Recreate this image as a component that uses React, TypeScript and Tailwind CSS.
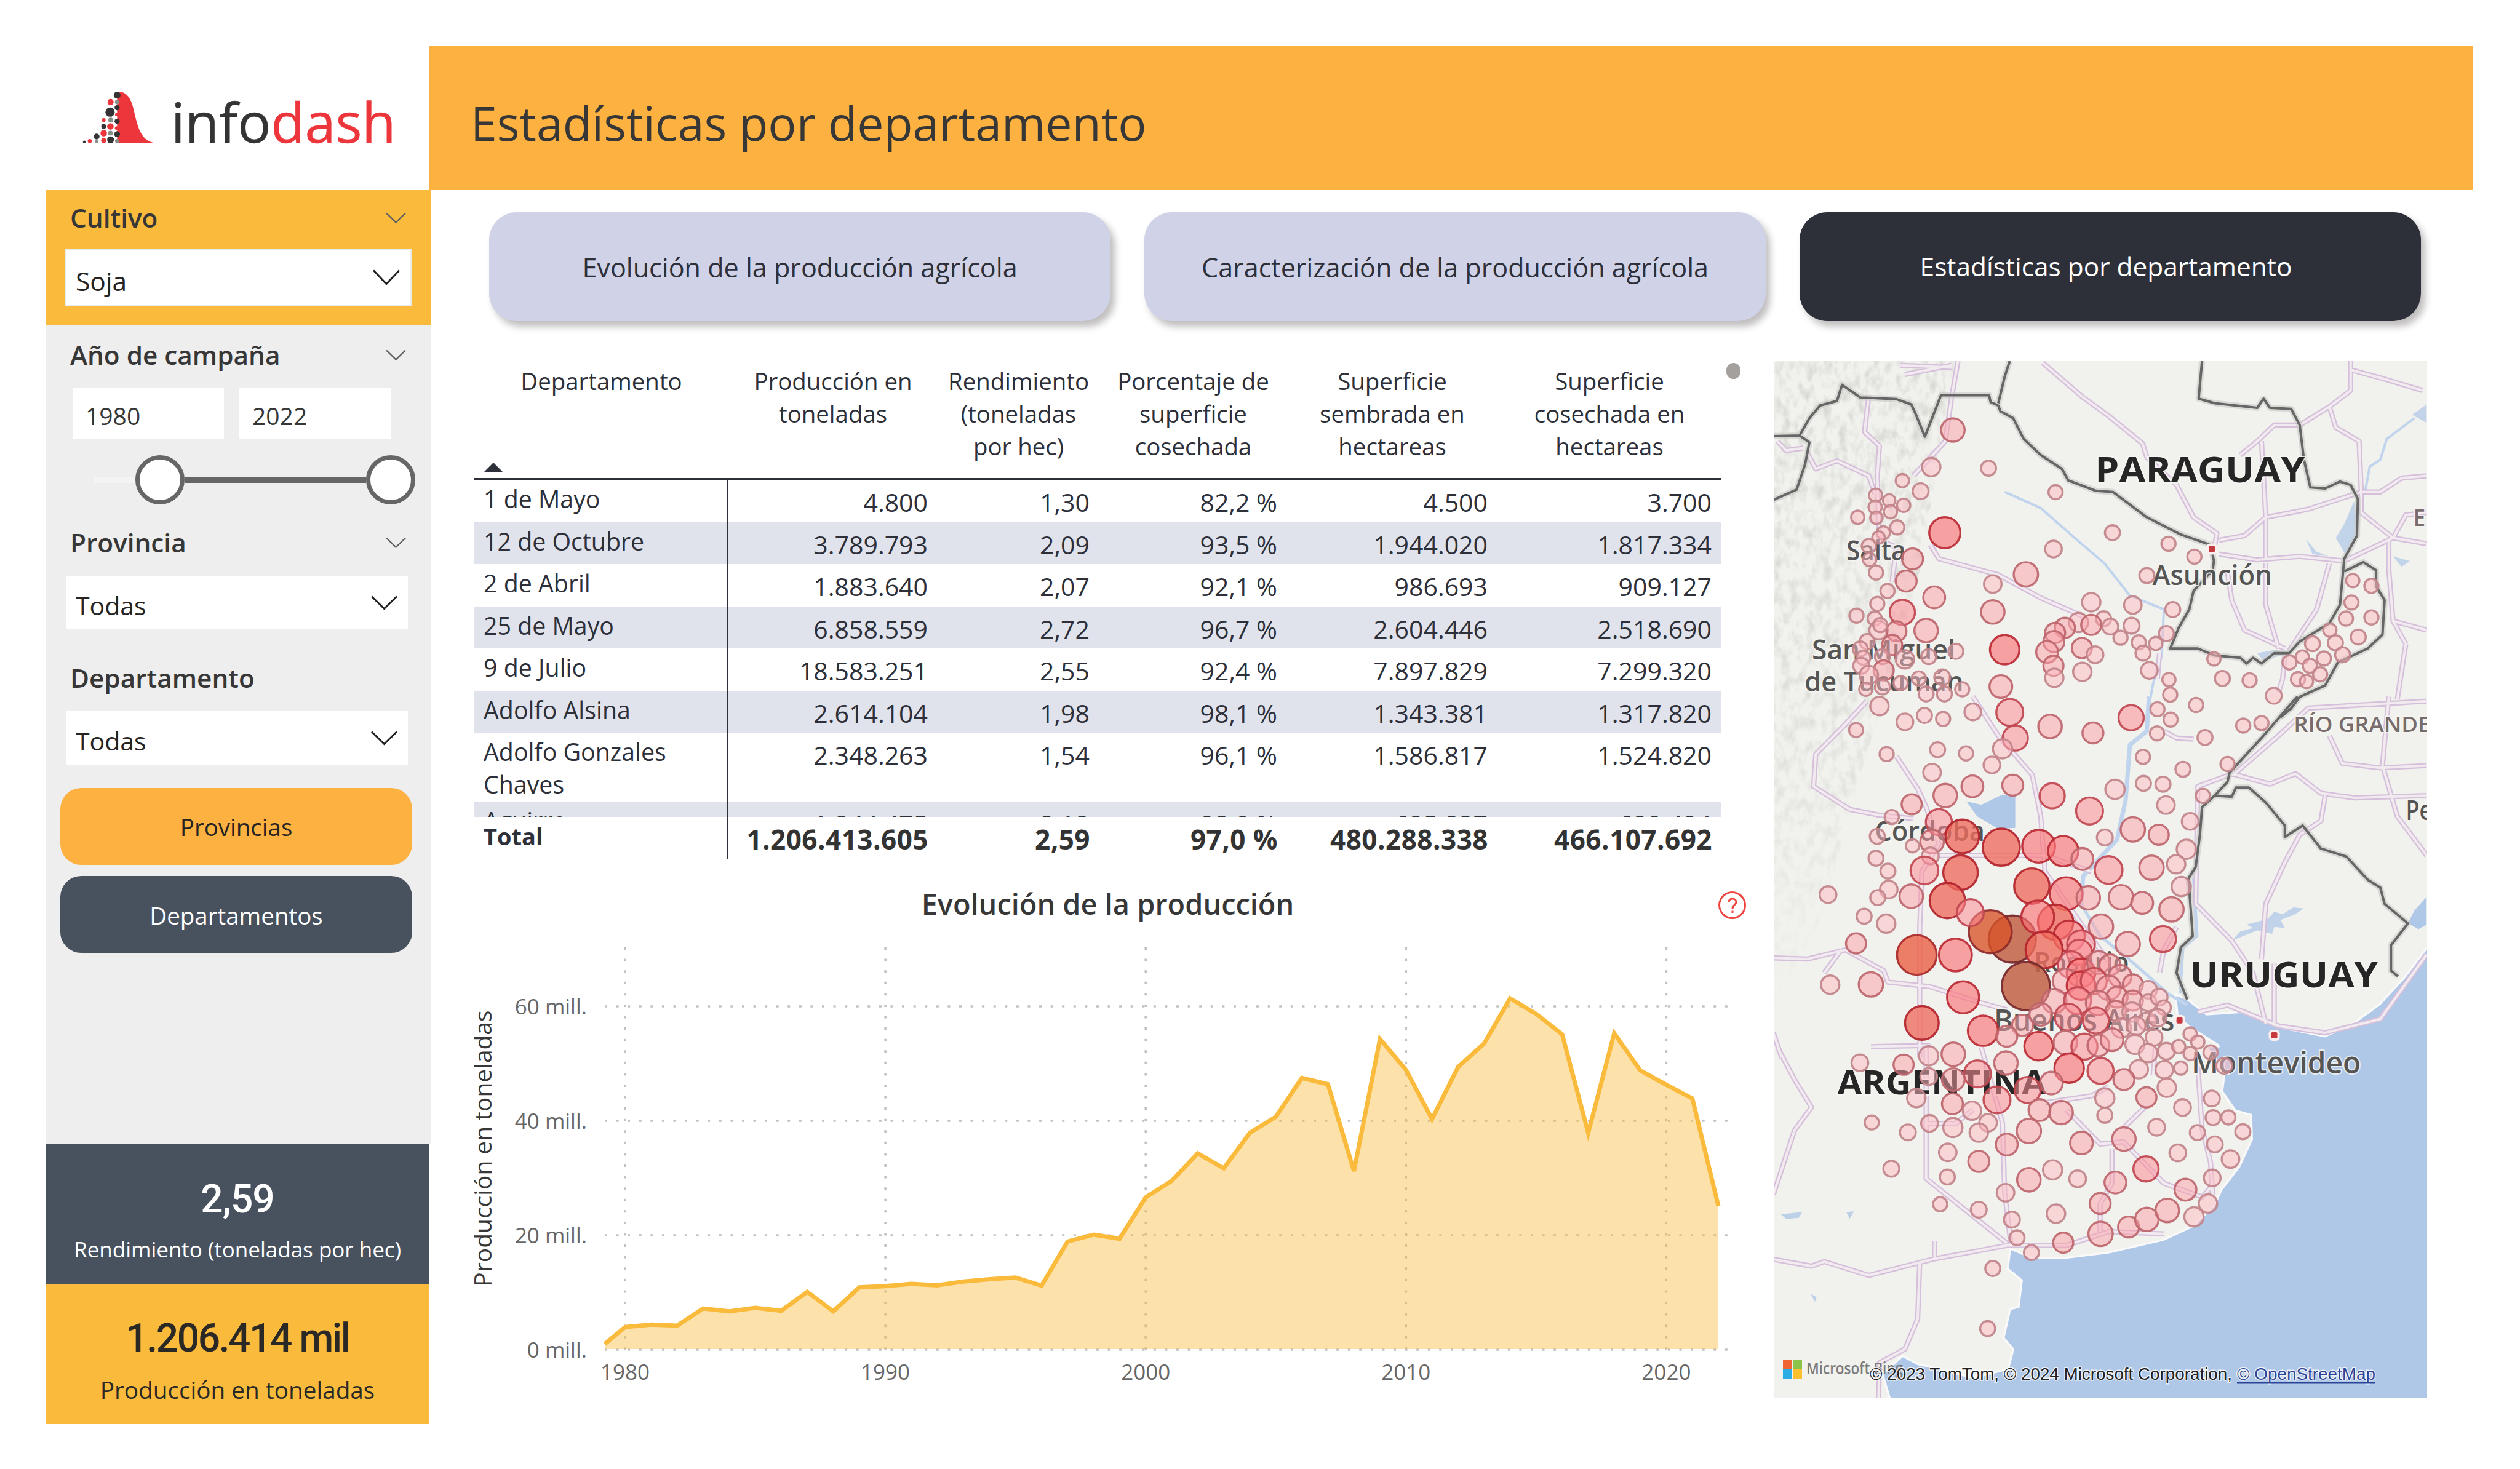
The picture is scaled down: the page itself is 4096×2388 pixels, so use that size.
import type { ReactNode } from "react";

const UI = "font-['Open_Sans','Noto_Sans',sans-serif]";

/* ---------- small pieces ---------- */

function Chevron({ w, h, color, stroke }: { w: number; h: number; color: string; stroke: number }) {
  return (
    <svg width={w} height={h} viewBox={`0 0 ${w} ${h}`} fill="none" stroke={color} strokeWidth={stroke} className="shrink-0">
      <path d={`M1 1.5L${w / 2} ${h - 2.5}L${w - 1} 1.5`} />
    </svg>
  );
}

function SlicerTitle({ children, chevron = true }: { children: ReactNode; chevron?: boolean }) {
  return (
    <div className="flex h-[60px] items-center justify-between pr-[40px] pl-[40px]">
      <span className="text-[42.3px] leading-[60px] font-semibold text-[#373737]">{children}</span>
      {chevron && <Chevron w={33} h={19} color="#606060" stroke={2.4} />}
    </div>
  );
}

/* ---------- logo ---------- */

const DARK = "#353435";
const RED = "#ec363b";
const GREY = "#899088";
const DOTS: [number, number, number, string][] = [
  [73, 346, 8, DARK], [105, 341, 12, RED], [145, 315, 17, DARK], [145, 344, 9, GREY],
  [186, 219, 11, RED], [186, 256, 14, DARK], [186, 295, 19, RED], [186, 338, 15, RED],
  [226, 114, 18, RED], [223, 173, 27, DARK], [226, 219, 14, GREY], [225, 256, 19, RED],
  [225, 295, 14, GREY], [226, 334, 20, DARK], [262, 187, 10, RED], [262, 266, 11, RED],
  [264, 74, 20, DARK], [264, 114, 13, GREY], [264, 147, 15, DARK], [264, 226, 15, DARK],
  [264, 301, 17, DARK], [264, 341, 12, GREY],
];

function Logo() {
  return (
    <div className="flex h-[235px] w-[624px] shrink-0 items-start pt-[68px] pl-[54px]">
      <svg width="147" height="96" viewBox="41 29 526 343">
        <path d="M264 54C312 50 338 84 352 128C372 196 378 262 414 312C432 336 455 346 484 353L264 353Z" fill={RED} />
        {DOTS.map(([x, y, r, c], i) => (
          <circle key={i} cx={x} cy={y} r={r} fill={c} />
        ))}
      </svg>
      <span className="-mt-[5px] ml-[3px] text-[90px] leading-[120px] text-[#353435] [-webkit-text-stroke:0.6px]">
        info<span className="text-[#ec363b]">dash</span>
      </span>
    </div>
  );
}

/* ---------- sidebar ---------- */

function Dropdown({ value }: { value: string }) {
  return (
    <div className="ml-[34px] flex h-[87px] w-[555px] items-center justify-between bg-white pr-[17px] pl-[15px]">
      <span className="pt-[9px] text-[41px] leading-[60px] text-[#252423]">{value}</span>
      <Chevron w={43} h={24} color="#1f1f1f" stroke={3} />
    </div>
  );
}

function Sidebar() {
  return (
    <aside className="flex w-[626px] shrink-0 flex-col">
      <section className="h-[220px] bg-[#fabb3d] pt-[15px]">
        <SlicerTitle>Cultivo</SlicerTitle>
        <div className="mt-[20px] ml-[31px] flex h-[94px] w-[565px] items-center justify-between border-[3px] border-[#e9ecec] bg-white pr-[17px] pl-[15px]">
          <span className="pt-[12px] text-[42.5px] leading-[60px] text-[#252423]">Soja</span>
          <Chevron w={44} h={26} color="#1f1f1f" stroke={3} />
        </div>
      </section>
      <section className="h-[1331px] bg-[#eeeeee] pt-[18px]">
        <SlicerTitle>Año de campaña</SlicerTitle>
        <div className="mt-[24px] ml-[44px] flex gap-[25px]">
          {["1980", "2022"].map((y) => (
            <div key={y} className="flex h-[83px] w-[246px] items-center bg-white pt-[6px] pl-[21px] text-[39px] leading-[60px] text-[#373737]">
              {y}
            </div>
          ))}
        </div>
        <div className="mt-[26px] flex h-[80px] items-center pl-[79px]">
          <div className="h-[9px] w-[67px] bg-[#f4f4f4]" />
          <div className="size-[80px] rounded-full border-[7px] border-[#666666] bg-white" />
          <div className="h-[10px] w-[295px] bg-[#666666]" />
          <div className="size-[80px] rounded-full border-[7px] border-[#666666] bg-white" />
        </div>
        <div className="mt-[32px]">
          <SlicerTitle>Provincia</SlicerTitle>
        </div>
        <div className="mt-[24px]">
          <Dropdown value="Todas" />
        </div>
        <div className="mt-[49px]">
          <SlicerTitle chevron={false}>Departamento</SlicerTitle>
        </div>
        <div className="mt-[24px]">
          <Dropdown value="Todas" />
        </div>
        <div className="mt-[38px] ml-[24px] flex w-[572px] flex-col gap-[18px] text-[38.5px]">
          <button className="h-[125px] rounded-[34px] bg-[#fcb140] pt-[3px] text-[#252423]">Provincias</button>
          <button className="h-[125px] rounded-[34px] bg-[#48525f] pt-[4px] text-white">Departamentos</button>
        </div>
      </section>
      <section className="flex h-[228px] w-[624px] flex-col items-center bg-[#48525f] pt-[50px] text-white">
        <span className="font-['Roboto',sans-serif] text-[64px] leading-[80px] font-medium tracking-[-1px]">2,59</span>
        <span className="mt-[11px] text-[35px] leading-[60px] whitespace-nowrap">Rendimiento (toneladas por hec)</span>
      </section>
      <section className="flex h-[227px] w-[624px] flex-col items-center bg-[#fabb3d] pt-[48px] text-[#2b2926]">
        <span className="font-['Roboto',sans-serif] text-[64px] leading-[80px] font-medium tracking-[-2.4px]">1.206.414 mil</span>
        <span className="mt-[13px] text-[38.7px] leading-[60px] whitespace-nowrap">Producción en toneladas</span>
      </section>
    </aside>
  );
}

/* ---------- table ---------- */

const COLS = "grid grid-cols-[413px_340px_263px_305px_342px_364px]";
const HEAD: string[][] = [
  ["Producción en", "toneladas"],
  ["Rendimiento", "(toneladas", "por hec)"],
  ["Porcentaje de", "superficie", "cosechada"],
  ["Superficie", "sembrada en", "hectareas"],
  ["Superficie", "cosechada en", "hectareas"],
];
const ROWS: string[][] = [
  ["1 de Mayo", "4.800", "1,30", "82,2 %", "4.500", "3.700"],
  ["12 de Octubre", "3.789.793", "2,09", "93,5 %", "1.944.020", "1.817.334"],
  ["2 de Abril", "1.883.640", "2,07", "92,1 %", "986.693", "909.127"],
  ["25 de Mayo", "6.858.559", "2,72", "96,7 %", "2.604.446", "2.518.690"],
  ["9 de Julio", "18.583.251", "2,55", "92,4 %", "7.897.829", "7.299.320"],
  ["Adolfo Alsina", "2.614.104", "1,98", "98,1 %", "1.343.381", "1.317.820"],
  ["Adolfo Gonzales Chaves", "2.348.263", "1,54", "96,1 %", "1.586.817", "1.524.820"],
  ["Aguirre", "1.244.475", "2,12", "98,0 %", "625.837", "620.494"],
];
const TOTAL = ["Total", "1.206.413.605", "2,59", "97,0 %", "480.288.338", "466.107.692"];

function Table() {
  return (
    <div className="flex h-[810px]">
      <div className="w-[2027px] text-[#2d2f39]">
        <div className={`${COLS} h-[193px] border-b-[3px] border-[#2d2f39] pt-[6px] text-center text-[38.4px] leading-[53px]`}>
          <div className="flex flex-col justify-between pb-[10px]">
            <span>Departamento</span>
            <svg width="30" height="15" viewBox="0 0 30 15" className="ml-[16px]">
              <path d="M0 15L15 0L30 15Z" fill="#2d2f39" />
            </svg>
          </div>
          {HEAD.map((lines, i) => (
            <div key={i}>
              {lines.map((l) => (
                <div key={l} className="whitespace-nowrap">{l}</div>
              ))}
            </div>
          ))}
        </div>
        <div className="h-[547.5px] overflow-hidden">
          {ROWS.map((r, i) => (
            <div key={r[0]} className={`${COLS} ${i === 6 ? "h-[111.5px]" : "h-[68.5px]"} ${i % 2 ? "bg-[#e0e2ec]" : "bg-white"}`}>
              <div className="border-r-[3px] border-[#2d2f39] pt-[5px] pr-[60px] pl-[15px] text-[39.3px] leading-[53px]">{r[0]}</div>
              {r.slice(1).map((c, j) => (
                <div key={j} className="pt-[10px] pr-[16px] text-right text-[41px] leading-[53px]">{c}</div>
              ))}
            </div>
          ))}
        </div>
        <div className={`${COLS} h-[69.5px] font-bold`}>
          <div className="border-r-[3px] border-[#2d2f39] pt-[5px] pl-[15px] text-[38px] leading-[53px]">{TOTAL[0]}</div>
          {TOTAL.slice(1).map((c, j) => (
            <div key={j} className="pt-[10px] pr-[15px] text-right text-[44px] leading-[53px] tracking-[0.5px] text-[#333333]">{c}</div>
          ))}
        </div>
      </div>
      <div className="mt-[3px] ml-[8px] h-[26px] w-[23px] rounded-full bg-[#a3a09d]" />
    </div>
  );
}

/* ---------- area chart ---------- */

const X0 = 1016;
const STEP = 42.31;
const BASE = 2194;
const SERIES = [
  3.95, 4.37, 4.2, 7.2, 6.7, 7.3, 6.8, 10.1, 6.7, 10.9, 11.1, 11.5, 11.25, 11.9, 12.3, 12.6, 11.2, 18.9, 20.1, 19.4,
  26.6, 29.5, 34.3, 31.7, 37.9, 40.7, 47.5, 46.4, 31.2, 54.3, 48.9, 40.3, 49.4, 53.5, 61.4, 58.7, 55.1, 37.9, 55.3,
  48.8, 46.3, 43.9, 25.1,
];
const yOf = (v: number) => BASE - v * 9.3;
const LINE = [[983, yOf(1)], ...SERIES.map((v, i) => [X0 + i * STEP, yOf(v)])].map((p) => p.join(" ")).join("L");

function Chart() {
  return (
    <div className="mt-[42px] w-[2067px]">
      <div className="flex h-[60px] items-center">
        <h2 className="flex-1 pl-[37px] text-center text-[46.9px] leading-[60px] font-semibold text-[#373737]">Evolución de la producción</h2>
        <div className="mt-[5px] flex size-[45px] items-center justify-center rounded-full border-[3.5px] border-[#ee4541] text-[#ee4541]">
          <svg width="16" height="26" viewBox="0 0 16 26" fill="none" stroke="currentColor" strokeWidth="3">
            <path d="M2 8C2 4 4.5 2 8 2S14 4.500 14 7.500C14 12 8 12 8 18" />
            <path d="M8 21.500V25" />
          </svg>
        </div>
      </div>
      <svg width="2067" height="817" viewBox="771 1499 2067 817" className="block">
        <g stroke="#c2c2c2" strokeWidth="3.6" strokeDasharray="4 14.58">
          {[0, 20, 40, 60].map((v) => (
            <path key={v} d={`M983 ${yOf(v)}H2820`} />
          ))}
          {[0, 10, 20, 30, 40].map((n) => (
            <path key={n} d={`M${X0 + n * STEP} 1540V${BASE}`} />
          ))}
        </g>
        <path d={`M${LINE}V${BASE - 1}H983Z`} fill="#fabb3d" fillOpacity="0.44" />
        <path d={`M${LINE}`} fill="none" stroke="#fabb3d" strokeWidth="7" />
        <g fill="#666666" fontSize="35">
          {[0, 20, 40, 60].map((v) => (
            <text key={v} x="954" y={yOf(v) + 13} textAnchor="end">{`${v} mill.`}</text>
          ))}
          {[1980, 1990, 2000, 2010, 2020].map((n) => (
            <text key={n} x={X0 + (n - 1980) * STEP} y="2243" textAnchor="middle">{n}</text>
          ))}
        </g>
        <text transform="translate(799 1867) rotate(-90)" textAnchor="middle" fontSize="38.9" fill="#373737">
          Producción en toneladas
        </text>
      </svg>
    </div>
  );
}

/* ---------- map ---------- */

const SX = 0.69;
const SY = 0.3744;
const NORTH = -8.24;
const MIDDLE = 545.3;
const SOUTH = 1115.6;

type Spot = [number, number, number];

const NORTH_SPOTS: Spot[] = [
  [433, 321, 30], [382, 482, 24], [517, 487, 20], [314, 541, 18], [357, 587, 21], [251, 604, 18], [283, 627, 17],
  [317, 648, 18], [250, 656, 18], [286, 676, 18], [209, 700, 18], [253, 702, 17], [302, 744, 19], [675, 591, 19],
  [269, 768, 18], [258, 788, 17], [414, 767, 39], [809, 767, 20], [670, 838, 22], [941, 815, 19], [1002, 871, 19],
  [235, 825, 19], [237, 884, 18], [338, 881, 27], [252, 940, 19], [323, 977, 27], [605, 948, 31], [890, 953, 20],
  [527, 990, 23], [279, 1020, 19], [389, 1048, 28], [255, 1076, 19], [314, 1113, 32], [206, 1127, 19], [527, 1111, 30],
  [249, 1140, 19], [759, 1069, 24], [857, 1081, 23], [951, 1101, 20], [258, 1190, 24], [300, 1195, 26], [262, 1168, 19],
  [370, 1192, 30], [729, 1157, 25], [788, 1141, 20], [759, 1167, 26], [697, 1180, 26], [804, 1175, 21], [854, 1171, 21],
  [828, 1223, 19], [936, 1205, 20], [871, 1243, 19], [911, 1248, 18], [881, 1290, 20], [674, 1202, 26], [671, 1240, 27],
  [655, 1285, 28], [737, 1268, 26], [768, 1297, 22], [670, 1345, 26], [738, 1371, 24], [672, 1397, 24], [896, 1365, 22],
  [942, 1405, 18], [945, 1470, 19], [555, 1275, 37], [546, 1435, 29], [567, 1547, 34], [231, 1240, 20], [215, 1272, 20],
  [290, 1255, 26], [267, 1305, 20], [222, 1310, 19], [320, 1317, 24], [376, 1305, 20], [440, 1282, 20], [217, 1345, 21],
  [270, 1365, 26], [235, 1385, 24], [353, 1400, 19], [408, 1395, 21], [310, 1420, 19], [267, 1437, 20], [228, 1447, 18],
  [370, 1467, 20], [413, 1467, 20], [455, 1447, 19], [260, 1520, 24], [480, 1545, 22], [1048, 1315, 18], [1068, 1400, 20],
  [1132, 1408, 19], [1189, 1475, 21], [1006, 1515, 19], [1226, 1330, 19], [1256, 1307, 18], [1274, 1345, 19],
  [1307, 1313, 19], [1246, 1403, 19], [1266, 1413, 18], [1298, 1382, 19], [1321, 1190, 18], [1280, 1249, 20],
  [1334, 1245, 20], [1351, 1297, 20], [1388, 1220, 20], [1359, 1140, 19], [1419, 1135, 19], [1372, 1070, 19],
  [1375, 975, 18], [1419, 998, 19],
];

const MIDDLE_SPOTS: Spot[] = [
  [915, 55, 19], [946, 100, 19], [366, 82, 20], [410, 97, 19], [320, 110, 22], [205, 145, 19], [662, 130, 30],
  [763, 158, 27], [853, 92, 32], [914, 160, 19], [1027, 178, 20], [1117, 126, 19], [1160, 115, 19], [580, 180, 32],
  [550, 227, 25], [525, 297, 22], [277, 250, 19], [397, 231, 20], [464, 247, 19], [881, 262, 19], [975, 316, 20],
  [1080, 293, 19], [384, 330, 23], [479, 390, 28], [574, 385, 27], [667, 431, 32], [415, 430, 30], [815, 403, 25],
  [882, 377, 20], [928, 381, 20], [1022, 431, 19], [935, 471, 23], [336, 468, 26], [755, 497, 34], [289, 523, 19],
  [992, 542, 22], [400, 545, 33], [857, 577, 31], [918, 600, 26], [455, 607, 42], [547, 654, 46], [635, 650, 41],
  [693, 671, 38], [791, 612, 21], [255, 607, 20], [384, 630, 30], [338, 648, 18], [380, 692, 22], [738, 705, 28],
  [983, 663, 25], [252, 702, 20], [280, 758, 20], [366, 755, 35], [451, 764, 43], [800, 753, 35], [901, 743, 31],
  [959, 728, 24], [282, 838, 23], [256, 873, 20], [139, 860, 22], [335, 867, 30], [971, 825, 25], [420, 886, 44],
  [619, 823, 44], [700, 856, 41], [752, 874, 30], [829, 871, 31], [879, 896, 28], [573, 1053, 58], [521, 1021, 53],
  [474, 938, 34], [948, 924, 31], [224, 954, 20], [276, 986, 24], [782, 999, 31], [675, 980, 44], [633, 957, 41],
  [707, 1040, 39], [648, 1100, 46], [735, 1075, 35], [845, 1075, 31], [928, 1053, 33], [205, 1072, 26], [348, 1122, 49],
  [439, 1122, 41], [731, 1110, 32], [605, 1257, 59], [144, 1251, 24], [240, 1250, 31], [457, 1306, 40], [360, 1417, 42],
  [504, 1451, 38], [712, 1165, 34], [735, 1200, 36], [776, 1155, 29], [803, 1165, 27], [697, 1235, 31], [827, 1215, 29],
  [735, 1255, 36], [765, 1235, 33], [800, 1265, 31], [857, 1250, 26], [893, 1273, 23], [820, 1305, 27], [857, 1320, 26],
  [893, 1330, 22], [919, 1305, 22], [930, 1350, 19], [672, 1322, 31], [727, 1320, 34], [775, 1330, 31], [817, 1365, 26],
  [855, 1370, 25], [640, 1380, 29], [705, 1392, 34], [770, 1407, 33], [830, 1440, 25], [890, 1410, 23], [915, 1395, 23],
  [865, 1430, 24], [597, 1428, 27], [560, 1475, 27], [635, 1518, 36], [698, 1503, 30], [743, 1520, 33], [776, 1515, 28],
  [808, 1490, 29], [862, 1510, 25], [907, 1480, 22], [893, 1548, 24], [936, 1540, 22], [965, 1520, 18], [992, 1465, 18],
  [1010, 1500, 18], [1040, 1545, 19],
];

const SOUTH_SPOTS: Spot[] = [
  [214, 67, 22], [317, 75, 26], [376, 37, 25], [434, 30, 30], [491, 115, 34], [558, 68, 30], [707, 90, 37],
  [781, 102, 33], [871, 95, 24], [836, 140, 27], [931, 97, 23], [970, 90, 18], [992, 27, 18], [1072, 80, 21],
  [376, 127, 22], [434, 140, 29], [665, 155, 29], [609, 185, 33], [537, 228, 34], [347, 220, 24], [432, 245, 27],
  [478, 275, 24], [516, 327, 23], [637, 272, 28], [688, 283, 30], [791, 220, 25], [791, 295, 20], [889, 217, 26],
  [937, 175, 24], [974, 261, 22], [1043, 222, 21], [378, 330, 22], [433, 348, 25], [494, 370, 24], [242, 326, 19],
  [327, 369, 21], [612, 363, 31], [560, 422, 28], [736, 415, 29], [836, 398, 30], [913, 347, 22], [1046, 305, 20],
  [1082, 304, 19], [1009, 370, 20], [1116, 366, 20], [1050, 421, 21], [1087, 485, 23], [963, 458, 22], [421, 456, 23],
  [494, 495, 27], [288, 527, 21], [420, 563, 20], [612, 575, 30], [668, 532, 25], [727, 571, 22], [888, 528, 32],
  [1044, 567, 22], [816, 587, 28], [981, 618, 28], [557, 631, 23], [403, 681, 19], [494, 705, 21], [780, 678, 27],
  [676, 722, 24], [1034, 678, 24], [572, 748, 21], [847, 780, 27], [890, 747, 30], [938, 708, 30], [1001, 736, 25],
  [781, 810, 31], [693, 848, 26], [584, 827, 20], [618, 891, 20], [527, 960, 20], [515, 1221, 20],
];

/* fill, outline and fill opacity by bubble size */
function tone(r: number): [string, string, number] {
  if (r >= 55) return ["#c26347", "#75282b", 0.86];
  if (r >= 50) return ["#d85329", "#8d2a2a", 0.78];
  if (r >= 47) return ["#eb6044", "#a82a2a", 0.8];
  if (r >= 42) return ["#f06c5e", "#b3242c", 0.78];
  if (r >= 36) return ["#fa7478", "#bb2a34", 0.65];
  if (r >= 32) return ["#fc8d95", "#c04650", 0.55];
  if (r >= 26) return ["#fb9fa7", "#bd666d", 0.5];
  return ["#ffbac2", "#c1848a", 0.5];
}

function Spots({ data, top }: { data: Spot[]; top: number }) {
  return (
    <>
      {data.map(([x, y, r], i) => {
        const [fill, stroke, o] = tone(r);
        return (
          <circle key={i} cx={x * SX - 7.6} cy={y * SY + top} r={r * SX - 1.6} fill={fill} fillOpacity={o} stroke={stroke} strokeOpacity={0.92} strokeWidth="3.4" />
        );
      })}
    </>
  );
}

const ROADS: [number, string][] = [
  [NORTH, "M445 22L430 180L415 370L340 520M645 30L740 180L800 260L880 380L890 440L960 560L1000 700L1055 770L1050 820M1370 22L1370 150L1320 220L1335 310L1390 370L1395 590L1395 680L1470 790L1549 815M1370 60L1450 100L1540 150M1320 220L1250 300L1190 300L1150 370L1110 430M1160 370L1170 700L1170 880M1395 590L1270 665L1200 690L1170 700L1120 780L1060 800M1060 860L1150 885L1250 870L1355 890L1470 790L1500 690L1549 680M235 170L225 330L260 390L255 520M90 420L110 490L160 455L235 520L250 600M380 820L400 880L540 950L640 1050L740 1130M1080 940L1090 1060L1120 1190L1215 1270M1170 900L1170 1080L1200 1270M1320 900L1290 1100L1225 1280M1460 800L1460 930L1470 1150L1500 1250M1470 1150L1549 1190M920 1290L915 1400M1215 1290L1210 1400L1200 1460M1500 1250L1480 1490M255 520L260 800L300 830L290 980M310 40L430 50M320 80L430 40M1395 590L1440 590L1490 530L1549 520M20 370L40 410L80 400"],
  [MIDDLE, "M230 20L180 120L110 250L105 390L190 490L260 515L340 530M300 260L350 400L370 480L400 640L360 760L355 1000L355 1568M480 0L540 170L620 340L640 520L650 760L740 1000L800 1150M1549 20L1270 50L1200 170L1100 330L1010 390L1005 900L1090 1060L1140 1200L1170 1420M1090 335L1180 380L1240 335L1300 420L1380 440L1549 430M1320 170L1350 290L1440 310L1549 300M1460 0L1445 300L1480 520L1549 690M1310 430L1300 540L1250 600L1215 720L1170 900L1160 1140M10 1135L90 1140L180 1100L270 1190L280 1240L380 1260L500 1330L560 1360M170 1100L130 1200M930 150L960 180L1000 185M1549 1120L1440 1400L1310 1460L1200 1430L1080 1340L1010 1370M1190 1160L1190 1430M240 1520L380 1515M400 690L650 690L760 760M960 1000L930 1100L920 1200M10 1460L30 1568"],
  [SOUTH, "M20 0L60 140L100 260L60 360L10 640M370 0L370 570L560 850M370 330L440 330L480 270M10 920L100 950L130 930L235 990L385 920L560 860L700 860L800 800L930 810M355 930L350 1180L320 1310L260 1370L258 1521M390 840L390 920M500 0L550 330L555 630L570 860M650 240L760 210L800 170M700 270L780 420L835 410L930 590L1020 650L1045 600M885 260L835 350M808 440L808 590L780 680L780 800M1010 80L1020 350L1040 500L1045 640M910 0L905 120"],
];

const BORDERS: [number, string][] = [
  [NORTH, "M567 22L555 90L540 205M10 348L72 345L95 270L120 215L160 195L172 125L215 180L300 187L335 210L345 250L367 350L385 265L405 170L518 170L522 200L540 215L545 240L575 270L600 360L640 430L690 490L705 540L770 585L810 590L890 700L970 775L1040 820L1048 890L1045 930L1000 1020L990 1100L965 1180L945 1270L1010 1270L1050 1300L1110 1310L1125 1335L1140 1310L1160 1335L1190 1290L1225 1290L1250 1240L1320 1160L1345 1080L1355 880L1385 780L1387 620L1370 560L1345 545L1310 575L1275 570L1260 450L1250 300L1230 230L1180 225L1165 185L1150 225L1050 205L1012 185L1020 22M72 345L95 375L85 470L65 580L10 625M1355 935L1400 895L1430 930L1430 1000L1450 1060L1445 1210L1410 1270L1340 1330L1310 1430L1250 1480L1230 1530L1205 1568"],
  [MIDDLE, "M1245 0L1230 30L1160 180L1085 330L1080 370L1050 430L1020 480L1015 600L1005 740L988 790L998 1040L970 1090L960 1200L985 1315M1050 430L1090 435L1100 395L1130 395L1170 460L1215 560L1215 610L1257 560L1300 660L1360 695L1410 795L1440 830L1450 900L1505 985L1465 1080L1465 1190L1482 1215"],
];

function band(top: number) {
  return `translate(-7.6 ${top}) scale(${SX} ${SY})`;
}

/* label text, x, y, width, font size, weight, colour, band */
const LABELS: [string, number, number, number, number, number, string, number][] = [
  ["PARAGUAY", 768, 547, 494, 58, 700, "#262626", NORTH],
  ["URUGUAY", 992, 1262, 442, 57, 700, "#262626", MIDDLE],
  ["ARGENTINA", 161, 205, 492, 54, 700, "#262626", SOUTH],
  ["Asunción", 903, 995, 282, 46, 600, "#555555", NORTH],
  ["Salta", 182, 887, 140, 46, 600, "#555555", NORTH],
  ["San Miguel", 101, 1317, 338, 46, 600, "#555555", NORTH],
  ["de Tucumán", 84, 1456, 374, 46, 600, "#555555", NORTH],
  ["Córdoba", 249, 628, 259, 46, 600, "#555555", MIDDLE],
  ["Rosario", 624, 1195, 224, 46, 600, "#555555", MIDDLE],
  ["Buenos Aires", 530, 1452, 425, 48, 600, "#555555", MIDDLE],
  ["Montevideo", 995, 112, 399, 48, 600, "#555555", SOUTH],
  ["RÍO GRANDE", 1236, 155, 322, 34, 600, "#786c6c", MIDDLE],
  ["Pe", 1500, 537, 62, 46, 600, "#555555", MIDDLE],
  ["E", 1518, 737, 28, 37, 600, "#786c6c", NORTH],
];

const CAPITALS: [number, number, number][] = [
  [1043, 838, NORTH],
  [967, 1406, MIDDLE],
  [1190, 1471, MIDDLE],
];

function MapView() {
  return (
    <svg width="1062" height="1685" viewBox="0 0 1062 1685" className="shrink-0 bg-[#f1f1ed]">
      <defs>
        <filter id="relief" x="0" y="0" width="100%" height="100%">
          <feTurbulence type="fractalNoise" baseFrequency="0.075 0.045" numOctaves="3" seed="11" />
          <feColorMatrix values="0 0 0 0 0.5  0 0 0 0 0.5  0 0 0 0 0.47  0 2.4 0 0 -1.05" />
        </filter>
        <linearGradient id="fadeY" x1="0" x2="0" y1="0" y2="1">
          <stop offset="0" stopColor="#fff" />
          <stop offset="0.6" stopColor="#fff" stopOpacity="0.7" />
          <stop offset="1" stopColor="#fff" stopOpacity="0" />
        </linearGradient>
        <mask id="andes">
          <path d="M0 0H300L270 150L240 330L190 520L150 640L80 900L0 1050Z" fill="url(#fadeY)" />
        </mask>
      </defs>

      <g mask="url(#andes)">
        <rect width="300" height="1050" filter="url(#relief)" opacity="0.5" />
      </g>

      <g fill="#afc8e8" stroke="#f8f9f8" strokeWidth="7" paintOrder="stroke">
        <path
          transform={band(MIDDLE)}
          vectorEffect="non-scaling-stroke"
          d="M1549 1100L1500 1220L1440 1340L1380 1420L1310 1480L1200 1440L1110 1375L1030 1385L985 1320L960 1300L965 1390L1000 1440L1060 1510L1075 1600L1560 1600L1560 1100Z"
        />
        <path
          transform={band(SOUTH)}
          vectorEffect="non-scaling-stroke"
          d="M1560 60L1075 120L1070 190L1100 270L1138 290L1140 400L1110 520L1068 620L1050 690L1000 780L930 840L800 895L700 918L620 920L570 880L565 960L598 1010L590 1130L570 1140L555 1260L578 1310L565 1400L480 1440L400 1400L350 1380L315 1345L270 1420L288 1530L1560 1530Z"
        />
      </g>
      <g fill="#afc8e8">
        <path transform={band(SOUTH)} d="M1034 0L1060 60L1075 130L1560 130L1560 0Z" />
        <g transform={band(MIDDLE)}>
          <path d="M1549 870L1520 930L1505 985L1530 1010L1549 990Z" />
          <path d="M465 455L500 470L545 430L580 425L580 570L540 575L490 520Z" />
          <path d="M1260 920L1235 915L1210 945L1190 935L1175 965L1125 990L1140 1005L1110 1020L1090 1060L1150 1015L1185 1030L1190 1000L1215 1005L1205 970L1240 945Z" opacity=".75" />
        </g>
        <g transform={band(NORTH)} opacity=".7">
          <path d="M1378 630L1355 730L1335 790L1360 870L1388 780Z" />
          <path d="M1265 795L1290 850L1320 870L1280 860Z" />
          <path d="M1470 870L1510 890L1490 915Z" />
          <path d="M1549 210L1515 255L1549 290Z" />
          <path d="M1150 1290L1165 1325L1220 1290L1195 1275Z" />
        </g>
        <g transform={band(SOUTH)} opacity=".8">
          <path d="M28 725L78 715L70 740L40 745Z" />
          <path d="M182 715L200 712L190 745Z" />
          <path d="M98 1070L112 1085L108 1105Z" />
        </g>
      </g>

      <g fill="none" stroke="#c1d4ee" strokeLinejoin="round">
        <path transform={band(NORTH)} d="M555 590L640 660L720 790L790 900L850 1040L930 1100L925 1300L905 1420L890 1568" strokeWidth="4" vectorEffect="non-scaling-stroke" />
        <path transform={band(NORTH)} d="M1520 270L1455 360L1440 450L1415 480L1405 580" strokeWidth="4" vectorEffect="non-scaling-stroke" />
        <path transform={band(MIDDLE)} d="M895 0L890 150L850 210L840 450L820 620L740 780L735 900" strokeWidth="7" vectorEffect="non-scaling-stroke" />
        <path transform={band(MIDDLE)} d="M735 900L780 1040L860 1160L940 1290L985 1340M1000 790L1008 1040L975 1090L968 1290" strokeWidth="5" vectorEffect="non-scaling-stroke" />
      </g>

      <g fill="none" strokeLinejoin="round">
        {ROADS.map(([top, d]) => (
          <path key={top} transform={band(top)} d={d} stroke="#d6bfdb" strokeWidth="8.5" vectorEffect="non-scaling-stroke" />
        ))}
        {ROADS.map(([top, d]) => (
          <path key={top} transform={band(top)} d={d} stroke="#f1ebf0" strokeWidth="4" vectorEffect="non-scaling-stroke" />
        ))}
        {BORDERS.map(([top, d]) => (
          <path key={top} transform={band(top)} d={d} stroke="#c9c9c5" strokeWidth="10" strokeOpacity=".6" vectorEffect="non-scaling-stroke" />
        ))}
        {BORDERS.map(([top, d]) => (
          <path key={top} transform={band(top)} d={d} stroke="#666666" strokeWidth="4" vectorEffect="non-scaling-stroke" />
        ))}
      </g>

      {CAPITALS.map(([x, y, top]) => (
        <rect key={x} x={x * SX - 14.6} y={y * SY + top - 7} width="14" height="14" rx="4" fill="#c43a3f" stroke="#fbeeee" strokeWidth="4" />
      ))}

      <g stroke="#f6f6f3" strokeWidth="4" strokeOpacity=".8" paintOrder="stroke" strokeLinejoin="round">
        {LABELS.map(([t, x, y, w, size, weight, color, top]) => (
          <text key={t} x={x * SX - 7.6} y={y * SY + top} textLength={w * SX} lengthAdjust="spacingAndGlyphs" fontSize={size} fontWeight={weight} fill={color}>
            {t}
          </text>
        ))}
      </g>

      <Spots data={NORTH_SPOTS} top={NORTH} />
      <Spots data={MIDDLE_SPOTS} top={MIDDLE} />
      <Spots data={SOUTH_SPOTS} top={SOUTH} />

      <g>
        <rect x="15" y="1623" width="15" height="15" fill="#f0652f" />
        <rect x="31" y="1623" width="15" height="15" fill="#8bc34a" />
        <rect x="15" y="1639" width="15" height="15" fill="#2bace4" />
        <rect x="31" y="1639" width="15" height="15" fill="#fcc02e" />
        <text x="53" y="1647" fontSize="27" fontWeight="600" fill="#7b7b7b" textLength="157" lengthAdjust="spacingAndGlyphs">
          Microsoft Bing
        </text>
        <g className="font-['Liberation_Sans',Arial,sans-serif]" fontSize="28" stroke="#fff" strokeWidth="3" strokeOpacity=".8" paintOrder="stroke">
          <text x="156" y="1656" fill="#222222" textLength="589" lengthAdjust="spacingAndGlyphs">
            © 2023 TomTom, © 2024 Microsoft Corporation,
          </text>
          <text x="753" y="1656" fill="#2d4596" textLength="225" lengthAdjust="spacingAndGlyphs">
            © OpenStreetMap
          </text>
          <path d="M753 1661H978" stroke="#2d4596" strokeOpacity="1" strokeWidth="3" />
        </g>
      </g>
    </svg>
  );
}

/* ---------- page ---------- */

const TAB = "flex h-[177px] w-[1010px] items-center justify-center rounded-[45px] whitespace-nowrap shadow-[7px_9px_12px_rgba(60,50,50,0.32)]";

export default function App() {
  return (
    <div className={`${UI} h-[2388px] w-[4096px] overflow-hidden bg-white pt-[74px] pl-[74px]`}>
      <header className="flex h-[235px]">
        <Logo />
        <div className="flex w-[3322px] items-center bg-[#fcb140] pt-[17px] pl-[67px]">
          <h1 className="text-[77px] leading-[100px] text-[#373737]">Estadísticas por departamento</h1>
        </div>
      </header>
      <div className="flex">
        <Sidebar />
        <main className="pl-[71px]">
          <nav className="flex gap-[55px] pt-[36px] pl-[24px]">
            <div className={`${TAB} bg-[#d0d2e7] pt-[3px] text-[43.1px] text-[#2d2f39]`}>Evolución de la producción agrícola</div>
            <div className={`${TAB} bg-[#d0d2e7] pt-[3px] text-[43.1px] text-[#2d2f39]`}>Caracterización de la producción agrícola</div>
            <div className={`${TAB} bg-[#2d2f39] pr-[14px] pb-[2px] text-[42.4px] text-white`}>Estadísticas por departamento</div>
          </nav>
          <div className="mt-[65px] flex">
            <div className="w-[2112px] shrink-0">
              <Table />
              <Chart />
            </div>
            <MapView />
          </div>
        </main>
      </div>
    </div>
  );
}
